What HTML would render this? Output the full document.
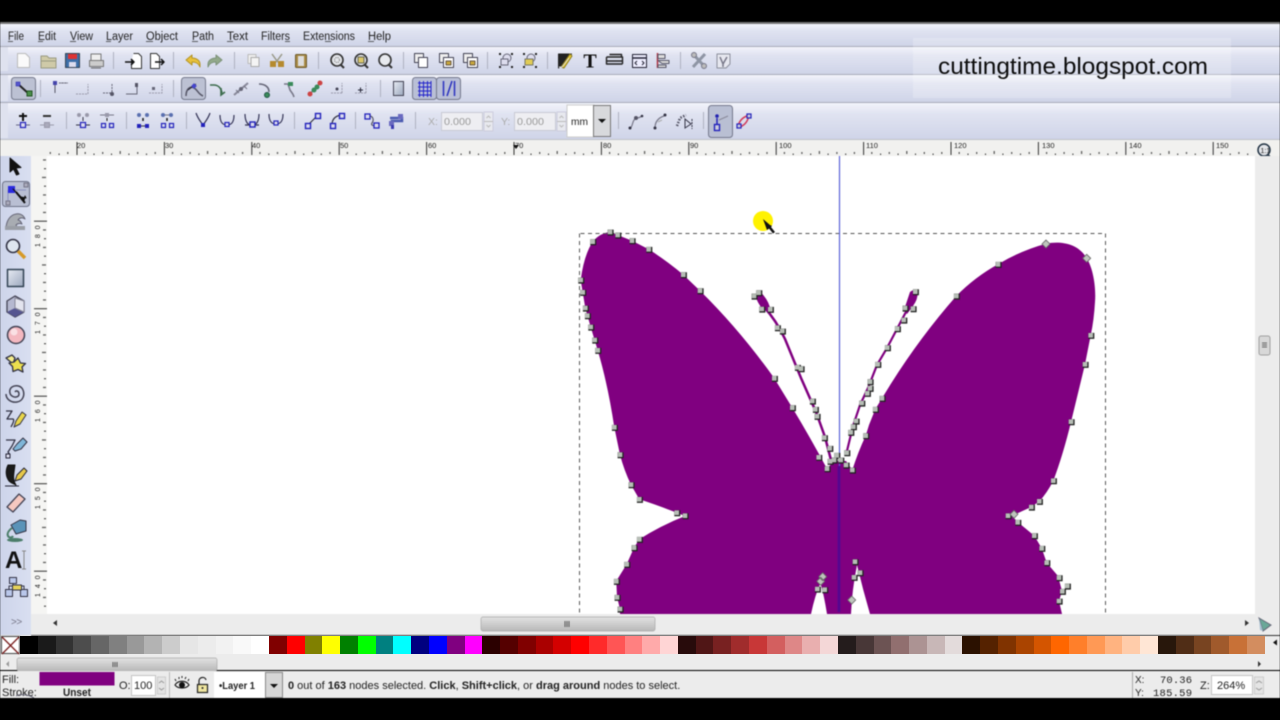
<!DOCTYPE html>
<html><head><meta charset="utf-8"><style>
html,body{margin:0;padding:0;background:#000;width:1280px;height:720px;overflow:hidden}
svg{display:block;position:absolute;left:0;top:0;filter:blur(.45px)}
text{font-family:"Liberation Sans",sans-serif;fill:#222}
#pal{position:absolute;left:20px;top:636px;height:18px;display:flex;filter:blur(.3px)}
#pal i{display:block;width:17.79px;height:18px}
</style></head><body>
<svg width="1280" height="720" viewBox="0 0 1280 720" xmlns="http://www.w3.org/2000/svg">
<defs>
<linearGradient id="tb" x1="0" y1="0" x2="0" y2="1"><stop offset="0" stop-color="#f3f4fb"/><stop offset=".3" stop-color="#e0e3f1"/><stop offset="1" stop-color="#cfd4e8"/></linearGradient>
<linearGradient id="sb" x1="0" y1="0" x2="0" y2="1"><stop offset="0" stop-color="#e2e2e2"/><stop offset="1" stop-color="#b8b8b8"/></linearGradient>
<linearGradient id="tl" x1="0" y1="0" x2="1" y2="0"><stop offset="0" stop-color="#cdd4ea"/><stop offset="1" stop-color="#d9dff1"/></linearGradient>
<linearGradient id="rc" x1="0" y1="0" x2="1" y2="1"><stop offset="0" stop-color="#e8ecf4"/><stop offset="1" stop-color="#9ba7bd"/></linearGradient>
<pattern id="rh" patternUnits="userSpaceOnUse" x="76.5" y="140" width="87.4" height="16"><path d="M.5 2v13M8.7 12v2M17.5 13.5v1.500M26.2 12v2M35 13.500v1.500M43.7 11v3M52.4 13.500v1.500M61.2 12v2M70 13.500v1.500M78.700 12v2" stroke="#333" fill="none"/></pattern>
<pattern id="rv" patternUnits="userSpaceOnUse" x="32" y="220.700" width="15" height="87.500"><path d="M2 .5h13M11 9.200h3M12 18h2M11 26.700h3M12 35.500h2M10 44.200h4M12 53h2M11 61.700h3M12 70.500h2M11 79.200h3" stroke="#333" fill="none"/></pattern>
</defs>

<rect width="1280" height="720" fill="#000"/>
<rect y="22" width="1280" height="2" fill="#777"/>
<rect y="24" width="1280" height="22" fill="url(#tb)"/>
<rect y="47" width="1280" height="27" fill="url(#tb)"/>
<rect y="75" width="1280" height="27" fill="url(#tb)"/>
<rect y="103" width="1280" height="37" fill="url(#tb)"/>
<path d="M0 46.500h1280M0 74.500h1280M0 102.500h1280" stroke="#a9acba"/>
<path d="M0 139.500h1280" stroke="#bfc1c8"/>
<rect x="913" y="38" width="318" height="60" fill="#fff" opacity=".22"/>
<path d="M0 47h8v24H0zM0 75h8v26H0zM0 103h8v35H0z" fill="#dfe2ef"/>

<!-- menu -->
<g font-size="11.500">
<text x="8" y="40" textLength="16" lengthAdjust="spacingAndGlyphs">File</text><text x="38" y="40" textLength="18" lengthAdjust="spacingAndGlyphs">Edit</text><text x="70" y="40" textLength="23" lengthAdjust="spacingAndGlyphs">View</text><text x="106" y="40" textLength="27" lengthAdjust="spacingAndGlyphs">Layer</text><text x="146" y="40" textLength="32" lengthAdjust="spacingAndGlyphs">Object</text><text x="192" y="40" textLength="22" lengthAdjust="spacingAndGlyphs">Path</text><text x="227" y="40" textLength="21" lengthAdjust="spacingAndGlyphs">Text</text><text x="261" y="40" textLength="29" lengthAdjust="spacingAndGlyphs">Filters</text><text x="303" y="40" textLength="52" lengthAdjust="spacingAndGlyphs">Extensions</text><text x="368" y="40" textLength="23" lengthAdjust="spacingAndGlyphs">Help</text>
</g>
<path d="M8 41.500h5M38 41.500h5M70 41.500h6M106 41.500h5M146 41.500h7M192 41.500h6M227 41.500h6M285 41.500h5M325 41.500h6M368 41.500h6" stroke="#333" stroke-width=".8"/>

<!-- toolbar separators -->
<path d="M113.500 52v17M173.500 52v17M234.500 52v17M318.500 52v17M403.500 52v17M487.500 52v17M547.500 52v17M680.500 52v17M40.500 80v17M173.500 80v17M380.500 80v17M66.500 112v17M126.500 112v17M186.500 112v17M294.500 112v17M355.500 112v17M415.500 112v17M618.500 112v17M703.500 112v17" stroke="#aeb1c0"/>

<!-- toolbar 1 -->
<g fill="none" stroke-linejoin="round">
<path d="M17.500 53.500h8l4 4v10h-12z" fill="#fafafa" stroke="#bbb"/>
<path d="M41 56h6l2 2h7v10H41z" fill="#cfcaa8" stroke="#9a9a80"/><path d="M41 61h15" stroke="#9a9a80"/>
<rect x="65.500" y="53.500" width="14" height="14" fill="#3d6fa8" stroke="#345"/><rect x="68" y="54" width="9" height="5" fill="#d33"/><rect x="69" y="62" width="7" height="5" fill="#dde"/>
<path d="M91 60v-6h10v6" fill="#eee" stroke="#777"/><rect x="89.500" y="60.500" width="14" height="6" fill="#ccc" stroke="#777"/><path d="M91 68h10" stroke="#666"/>
<path d="M133.500 53.500h5l3 3v12h-10v-8" fill="#fff" stroke="#333"/><path d="M125 62h9m-3-3l3 3-3 3" stroke="#111" stroke-width="1.500"/>
<path d="M150.500 53.500h6l3 3v12h-9z" fill="#fff" stroke="#333"/><path d="M155 62h9m-3-3l3 3-3 3" stroke="#111" stroke-width="1.500"/>
<path d="M186 60l6-5v3c5 0 8 3 8 6v3c-1-3-4-5-8-5v3z" fill="#e8c13a" stroke="#b39323"/>
<path d="M222 60l-6-5v3c-5 0-8 3-8 6v3c1-3 4-5 8-5v3z" fill="#92a98a" stroke="#7d927a"/>
<path d="M248 54.500h8v9h-8z" fill="#eee" stroke="#bbb"/><path d="M251 57.500h8v9h-8z" fill="#f4f4f4" stroke="#aaa"/>
<path d="M272 54l5 7 5-7M277 61l-5 4M277 61l5 4" stroke="#998" stroke-width="1.500"/><rect x="270" y="61" width="6" height="6" fill="#b58a2e"/><rect x="278" y="61" width="6" height="6" fill="#b58a2e"/>
<rect x="295.500" y="54.500" width="11" height="13" rx="1" fill="#a98b45" stroke="#6e5a2c"/><rect x="298" y="56" width="6" height="10" fill="#ddd"/>
<circle cx="337" cy="60" r="6" fill="#e4e6ea" stroke="#333" stroke-width="1.600"/><path d="M341 65l3 3" stroke="#333" stroke-width="2"/><circle cx="337" cy="60" r="2.500" stroke="#777" stroke-dasharray="1 1"/>
<circle cx="361" cy="60" r="6" fill="#e4e6ea" stroke="#333" stroke-width="1.600"/><path d="M365 65l3 3" stroke="#333" stroke-width="2"/><rect x="358" y="57" width="6" height="6" fill="#dbc76a" stroke="#665"/>
<circle cx="385" cy="60" r="6" fill="#e8eaee" stroke="#333" stroke-width="1.600"/><path d="M389 65l3 3" stroke="#333" stroke-width="2"/>
<rect x="414.500" y="53.500" width="9" height="9" fill="#eee" stroke="#445"/><rect x="418.500" y="57.500" width="9" height="10" fill="#fff" stroke="#445"/>
<rect x="439.500" y="53.500" width="9" height="9" fill="#eee" stroke="#445"/><rect x="443.500" y="57.500" width="10" height="10" fill="#fff" stroke="#445"/><rect x="446" y="61" width="5" height="4" fill="#c9a83a" stroke="#654"/>
<rect x="463.500" y="53.500" width="9" height="9" fill="#eee" stroke="#445"/><rect x="467.500" y="57.500" width="10" height="10" fill="#fff" stroke="#445"/><rect x="470" y="61" width="5" height="4" fill="#c9a83a" stroke="#654"/>
<path d="M499 54h2M511 54h2M499 67h2M511 67h2" stroke="#222" stroke-width="2"/><circle cx="507" cy="58" r="4" fill="#dde" stroke="#667"/><rect x="501" y="59" width="7" height="6" fill="#dde" stroke="#667"/>
<path d="M523 54h2M535 54h2M523 67h2M535 67h2" stroke="#222" stroke-width="2"/><circle cx="531" cy="58" r="4" fill="#dde" stroke="#667"/><rect x="525" y="59" width="8" height="6" fill="#e1cc55" stroke="#776"/>
<path d="M558.500 54h13l-2 3-11 11z" fill="#222" stroke="#222"/><path d="M570 54l-9 13 3 1 8-12z" fill="#e9cd3a" stroke="#8a7a1a"/><path d="M559 67h3l7-9" stroke="#ddd"/>
<path d="M606.500 57v7h3M606.500 57h16v7M606.500 61h16M606.500 64h16M609.500 54.500h12v2" stroke="#222" stroke-width="1.400"/>
<rect x="632.500" y="54.500" width="14" height="13" fill="#eef" stroke="#223"/><path d="M632 58h15" stroke="#223" stroke-width="1.500"/><path d="M637 61l-2 2 2 2M642 61l2 2-2 2" stroke="#223"/>
<path d="M657.500 53v15" stroke="#b03040" stroke-width="1.500"/><path d="M658 54.500h7v4h-7zM658 60.500h11v3h-7zM658 65h8v2.500h-8z" fill="#ddd" stroke="#556"/>
<path d="M693 54l12 13M705 54l-12 13" stroke="#8e95a4" stroke-width="3"/><circle cx="694" cy="55" r="2.500" fill="#bbb" stroke="#778"/><circle cx="704" cy="66" r="2.500" fill="#bbb" stroke="#778"/>
<path d="M717 54h13v10l-4 4h-9z" fill="#e6e7ef" stroke="#8c8f9c"/><path d="M720 57l3 7 4-7M723 64v3" stroke="#778" stroke-width="1.500"/>
</g>
<text x="590" y="67.500" font-size="20" font-weight="bold" text-anchor="middle" style="font-family:'Liberation Serif',serif;fill:#111">T</text>

<!-- toolbar 2 -->
<g fill="none">
<rect x="11.500" y="77.500" width="24" height="22" rx="3" fill="#bcc1d3" stroke="#75798c"/>
<path d="M18 84l11 10" stroke="#222" stroke-width="2"/><rect x="16" y="82" width="4" height="4" fill="#55c" stroke="#22a" stroke-width=".5"/><rect x="27" y="91" width="5" height="5" fill="#4a8f4a" stroke="#252"/>
<path d="M55 83v10M59 83h8" stroke="#556" /><rect x="53" y="81" width="4" height="4" fill="#44a"/><path d="M60 83h8" stroke="#889" stroke-dasharray="2 1"/>
<path d="M76 94h12v-10" stroke="#99a" stroke-dasharray="2 1"/><path d="M103 93h10M112 84v12" stroke="#667" stroke-dasharray="2 1"/><circle cx="112" cy="94" r="2" fill="#556"/>
<path d="M126 94h11v-9" stroke="#667"/><rect x="135" y="83" width="3" height="4" fill="#556"/>
<path d="M149 93h13V84" stroke="#99a" stroke-dasharray="2 1"/><rect x="152" y="87" width="3" height="3" fill="#667"/>
<rect x="181.500" y="77.500" width="24" height="22" rx="3" fill="#bcc1d3" stroke="#75798c"/>
<path d="M186 96c0-8 5-10 8-8 3 1 4 6 9 8" stroke="#556" stroke-width="1.500"/><path d="M188 90l8-6" stroke="#223"/><rect x="192" y="84" width="4" height="4" fill="#44c" transform="rotate(45 194 86)"/>
<path d="M210 85h4c4 0 7 3 8 8" stroke="#3a6a4a" stroke-width="1.600"/><path d="M221 88v7l4-3" stroke="#3a6a4a" stroke-width="1.600"/>
<path d="M234 95l14-12" stroke="#889" stroke-width="2"/><circle cx="241" cy="89" r="2" fill="#667"/><path d="M236 90l3 3M244 86l3 3" stroke="#778"/>
<path d="M259 84c6 0 10 3 10 8" stroke="#667" stroke-width="1.600"/><circle cx="267" cy="95" r="2.500" fill="#3a8a5a" stroke="#254"/>
<path d="M284 84h4l2 6c1 2 3 3 4 7" stroke="#778" stroke-width="1.600"/><rect x="288" y="82" width="5" height="4" fill="#3a8a5a"/>
<path d="M309 95l11-12" stroke="#778" stroke-width="1.500"/><circle cx="310" cy="94" r="2.500" fill="#c44"/><circle cx="314" cy="90" r="2.500" fill="#3a8a5a"/><circle cx="317" cy="87" r="2.500" fill="#3a8a5a"/><circle cx="320" cy="83" r="2.500" fill="#c44"/>
<path d="M331 93h11M342 93V83" stroke="#99a" stroke-dasharray="2 1"/><circle cx="337" cy="89" r="1.500" fill="#445"/>
<path d="M355 93h11M366 93V83" stroke="#99a" stroke-dasharray="2 1"/><path d="M358 90h5M360.500 87.500v5" stroke="#223"/>
<rect x="393.500" y="81.500" width="10" height="14" fill="url(#rc)" stroke="#445"/>
<rect x="412.500" y="77.500" width="24" height="22" rx="3" fill="#b9bfd6" stroke="#75798c"/>
<path d="M418 83h13M418 87h13M418 91h13M418 95h13M419.500 81v16M423.500 81v16M427.500 81v16M431 81v16" stroke="#2222cc"/>
<rect x="436.500" y="77.500" width="24" height="22" rx="3" fill="#b9bfd6" stroke="#75798c"/>
<path d="M443.500 81v15M454.500 81v15M447 96l5-15" stroke="#2a32c0" stroke-width="1.500"/>
</g>

<!-- toolbar 3 -->
<g fill="none">
<path d="M23 113v8M19 116h8" stroke="#111" stroke-width="2"/><path d="M16 125h14" stroke="#668"/><rect x="20.500" y="122.500" width="5" height="5" fill="#dde" stroke="#22b" stroke-width="1.200"/>
<path d="M43 116h8" stroke="#333" stroke-width="2"/><path d="M40 125h14" stroke="#99a"/><rect x="44.500" y="122.500" width="5" height="5" fill="#aab" stroke="#99a"/>
<circle cx="79" cy="115" r="2" fill="#99a"/><circle cx="87" cy="115" r="2" fill="#99a"/><path d="M83 117v4M76 125h14" stroke="#334"/><rect x="80.500" y="122.500" width="5" height="5" stroke="#22b" stroke-width="1.200" fill="#dde"/>
<path d="M100 115h14" stroke="#778"/><rect x="105" y="113" width="4" height="4" fill="#99a"/><path d="M107 118v3" stroke="#111"/><rect x="101.500" y="123.500" width="4" height="4" stroke="#22b" stroke-width="1.200"/><rect x="109.500" y="123.500" width="4" height="4" stroke="#22b" stroke-width="1.200"/>
<circle cx="139" cy="115" r="2" fill="#5a70b0"/><circle cx="147" cy="115" r="2" fill="#5a70b0"/><path d="M143 118v3" stroke="#111" stroke-width="1.500"/><path d="M139 126h8" stroke="#334"/><rect x="137" y="124" width="4" height="4" fill="#22b"/><rect x="145" y="124" width="4" height="4" fill="#22b"/>
<path d="M161 115h12" stroke="#778"/><circle cx="163" cy="115" r="2" fill="#5a70b0"/><circle cx="171" cy="115" r="2" fill="#5a70b0"/><path d="M167 118v3" stroke="#111" stroke-width="1.500"/><rect x="161.500" y="123.500" width="4" height="4" stroke="#22b" stroke-width="1.200"/><rect x="169.500" y="123.500" width="4" height="4" stroke="#22b" stroke-width="1.200"/>
<path d="M196 113c2 6 5 9 7 12 2-3 5-6 7-12" stroke="#335" stroke-width="1.200"/><rect x="201" y="123" width="4" height="4" fill="#22b"/>
<path d="M220 115c0 8 3 10 7 10s7-2 7-10" stroke="#335" stroke-width="1.200"/><rect x="225" y="122.500" width="4" height="4" fill="#dde" stroke="#22b" stroke-width="1.200"/>
<path d="M245 114c0 6 2 10 4 10M259 114c0 6-2 10-4 10M245 125h14" stroke="#335" stroke-width="1.200"/><rect x="250" y="122" width="5" height="5" fill="#dde" stroke="#22b" stroke-width="1.400"/>
<path d="M269 114c0 8 3 10 7 10s7-2 7-10" stroke="#335" stroke-width="1.200"/><rect x="274" y="121" width="4" height="4" fill="#dde" stroke="#22b" stroke-width="1.200"/>
<path d="M308 125l9-9" stroke="#334" stroke-width="1.200"/><rect x="305.500" y="123.500" width="5" height="5" stroke="#22b" stroke-width="1.400" fill="#dde"/><rect x="315.500" y="113.500" width="5" height="5" stroke="#22b" stroke-width="1.400" fill="#dde"/>
<path d="M332 125c0-6 3-9 9-10" stroke="#334" stroke-width="1.200"/><rect x="330.500" y="123.500" width="5" height="5" stroke="#22b" stroke-width="1.400" fill="#dde"/><rect x="339.500" y="113.500" width="5" height="5" stroke="#22b" stroke-width="1.400" fill="#dde"/>
<path d="M367 118c2-5 9 0 5 5-2 3 4 3 6 4" stroke="#556" stroke-width="1.200"/><rect x="365" y="114" width="5" height="5" stroke="#22b" stroke-width="1.300" fill="#dde"/><rect x="374" y="123" width="5" height="5" stroke="#22b" stroke-width="1.300" fill="#dde"/>
<path d="M390 118h12v3h-10v4" stroke="#4a5ab0" stroke-width="2.500"/><rect x="389" y="121" width="5" height="5" fill="#6a6ac0"/><rect x="398" y="114" width="5" height="5" fill="#6a6ac0"/><rect x="391" y="125" width="3" height="4" fill="#3a3ab0"/>
<rect x="441.500" y="112.500" width="41" height="18" fill="#eeeef2" stroke="#c8cad4"/><rect x="514.500" y="112.500" width="41" height="18" fill="#eeeef2" stroke="#c8cad4"/>
<rect x="484" y="112" width="9" height="19" fill="#e8e9ef" stroke="#ccd"/><path d="M484 121.500h9M486.500 118l2-2 2 2M486.500 125l2 2 2-2" stroke="#bbb"/>
<rect x="557" y="112" width="9" height="19" fill="#e8e9ef" stroke="#ccd"/><path d="M557 121.500h9M559.500 118l2-2 2 2M559.500 125l2 2 2-2" stroke="#bbb"/>
<rect x="567" y="105" width="27" height="32" fill="#fff" stroke="#ccc"/>
<rect x="593.500" y="105.500" width="17" height="31" fill="#d8d9dc" stroke="#777"/>
<path d="M598 119h8l-4 4z" fill="#111"/>
<path d="M630 128c3-1 2-7 5-9s3 0 7-3" stroke="#778" stroke-width="1.200"/><circle cx="630" cy="128" r="1.500" fill="#334"/><circle cx="636" cy="118" r="2" fill="#556"/><circle cx="642" cy="116" r="1.300" fill="#334"/>
<path d="M655 128c0-6 3-10 9-12" stroke="#778" stroke-width="1.200"/><circle cx="655" cy="128" r="1.500" fill="#334"/><circle cx="665" cy="115" r="1.500" fill="#334"/><path d="M658 122l4-2" stroke="#aaa"/>
<path d="M677 126l3-8 6-3" stroke="#556" stroke-width="2.500" stroke-dasharray="1.500 1.500"/><path d="M685 119l6 5-6 4z" stroke="#334"/><path d="M692 119v10" stroke="#334" stroke-dasharray="2 1"/>
<rect x="708.500" y="105.500" width="24" height="32" rx="3" fill="#b9bfd3" stroke="#75798c"/>
<path d="M717 118v7" stroke="#22b" stroke-width="1.500"/><circle cx="717" cy="116" r="1.800" fill="#2222b0"/><rect x="714.500" y="124.500" width="5" height="6" fill="#ccd" stroke="#22b" stroke-width="1.400"/><path d="M719 120l9-4" stroke="#889"/>
<path d="M738 126c2-7 6-9 11-11-1 6-4 10-9 12z" stroke="#d23a5a" stroke-width="1.500"/><rect x="737" y="124" width="4" height="4" fill="#ccd" stroke="#22b" stroke-width="1.200"/><rect x="747" y="114" width="4" height="4" fill="#ccd" stroke="#22b" stroke-width="1.200"/>
</g>
<text x="428" y="125" font-size="10.500" style="fill:#aaa">X:</text><text x="444" y="125" font-size="10.500" style="fill:#9a9a9a" textLength="27" lengthAdjust="spacingAndGlyphs">0.000</text>
<text x="501" y="125" font-size="10.500" style="fill:#aaa">Y:</text><text x="517" y="125" font-size="10.500" style="fill:#9a9a9a" textLength="27" lengthAdjust="spacingAndGlyphs">0.000</text>
<text x="571" y="125" font-size="10.500" textLength="17" lengthAdjust="spacingAndGlyphs" font-weight="500">mm</text>

<!-- ruler -->
<rect x="0" y="140" width="1280" height="16" fill="#f1f1ef"/>
<rect x="47" y="140" width="1208" height="16" fill="url(#rh)"/>
<g font-size="7.500" style="fill:#444"><text x="77" y="148">20</text><text x="165" y="148">30</text><text x="252" y="148">40</text><text x="340" y="148">50</text><text x="428" y="148">60</text><text x="515" y="148">70</text><text x="603" y="148">80</text><text x="690" y="148">90</text><text x="779" y="148">100</text><text x="866" y="148">110</text><text x="954" y="148">120</text><text x="1042" y="148">130</text><text x="1129" y="148">140</text><text x="1216" y="148">150</text></g>
<path d="M513 145h6l-3 4z" fill="#111"/>
<rect x="1255" y="140" width="25" height="16" fill="#f1f1ef"/>
<circle cx="1264" cy="150" r="6" fill="#e4e6ea" stroke="#234" stroke-width="1.500"/><path d="M1268 155l3 3" stroke="#234" stroke-width="2"/><text x="1260.500" y="153" font-size="7">1:1</text>

<!-- left toolbar & vruler -->
<rect x="0" y="156" width="31" height="479" fill="url(#tl)"/>
<rect x="31" y="156" width="16" height="458" fill="#f5f5f3"/>
<rect x="32" y="156" width="15" height="458" fill="url(#rv)"/>
<g font-size="7" style="fill:#444"><text transform="translate(40 247) rotate(-90)" letter-spacing="1.500">1 8 0</text><text transform="translate(40 334) rotate(-90)" letter-spacing="1.500">1 7 0</text><text transform="translate(40 422) rotate(-90)" letter-spacing="1.500">1 6 0</text><text transform="translate(40 509) rotate(-90)" letter-spacing="1.500">1 5 0</text><text transform="translate(40 597) rotate(-90)" letter-spacing="1.500">1 4 0</text></g>

<!-- canvas -->
<rect x="47" y="156" width="1208" height="458" fill="#fff"/>

<!-- butterfly -->
<g fill="#800080">
<path d="M610 232L617.700 235L632 240.700L648.700 249.300Q667 261 683.300 274.700L700 290.700Q740 330 774.300 378.300L792.300 407.700Q810 437 827 468.700L834 461L846 461L852.300 470Q858 452 865.700 435.700L869 425L875.300 409.300L882 398.300Q915 343 956.300 296Q975 277 998 264.300Q1022 250 1046 243.700C1060 241 1078 243 1086.700 258.300C1094 270 1096 290 1095 301.700Q1094 320 1090.700 335.300L1085 364.300L1071 422Q1063 455 1053.300 480.700Q1047 493 1039.300 501.300L1031.300 507Q1020 512 1012 516L1017.700 522L1034.300 535.700L1041.700 548.300L1046.700 562.700L1058 576L1062 591L1059 601L1062 614L870 614Q863 590 857 565Q852 590 851 614L827 614Q824 595 820.500 583Q815 595 811 614L620 614L620 609L617 597L616.300 581L626.700 564.300L634 547.700L639.300 539.300Q660 526 685 516Q660 506 639.300 499.300L631 484.700Q624 470 620 454.700L614.300 427.300Q608 385 597.700 350.300L590.700 327L585.300 308L580.700 280Q584 255 592.700 241.700Q600 233 610 232Z"/>
<path d="M755 295Q760 290 764 296Q769 302 770.500 310L763 310Q757 302 755 295Z"/>
<path d="M910 292Q914 288 917.500 293Q918 299 913 306L907 314L904 310Q908 298 910 292Z"/>
</g>
<g fill="none" stroke="#800080">
<path d="M764 307Q776 320 785 339L801 378L816 412L825 437L831 460" stroke-width="2.500"/>
<path d="M908 308L897 329L887 348L877 365L868 388L860 405L853 426L846 455" stroke-width="2.200"/>
</g>

<!-- bbox dashed + guide -->
<path d="M580.500 233.500H1105.500V614M579.500 233.500V614" fill="none" stroke="#555" stroke-dasharray="4 3.500"/>
<path d="M839.500 156V466" stroke="#5a62d8" stroke-width="1.200"/>
<path d="M839 466V612" stroke="#3d0c9a" stroke-width="3" opacity=".6"/>

<!-- nodes -->
<g fill="none" stroke-linecap="square">
<path transform="translate(.6 .6)" stroke="#222" stroke-width="6" d="M592.700 241.700h.01M610 232h.01M617.700 235h.01M632 240.700h.01M648.700 249.300h.01M683.300 274.700h.01M700 290.700h.01M774.300 378.300h.01M792.300 407.700h.01M580.700 280h.01M582.700 292.300h.01M585.300 308h.01M587.300 315.700h.01M590.700 327h.01M594.700 340h.01M597.700 350.300h.01M614.300 427.300h.01M620 454.700h.01M631 484.700h.01M639.300 499.300h.01M676.700 512.700h.01M685 515.700h.01M639.300 539.300h.01M634 547.700h.01M626.700 564.300h.01M616.300 581.300h.01M617 597.300h.01M620 609h.01M818.700 457.300h.01M827 468.700h.01M824.300 437.700h.01M829.700 448.300h.01M830 461.300h.01M836.700 455.300h.01M834 460h.01M840.700 460h.01M846.700 452.700h.01M846 465h.01M852.300 470h.01M865.700 435.700h.01M850.700 432.300h.01M853.300 426.700h.01M856 421h.01M817.300 589h.01M824.700 589.700h.01M855 561.700h.01M860 572.700h.01M854 577.300h.01M758.700 292.700h.01M754 296h.01M761.700 309h.01M770.300 309.300h.01M777.300 327.700h.01M782.300 331h.01M797.300 367.300h.01M801 368.700h.01M812.300 401h.01M815.300 409.300h.01M817 416.300h.01M915.300 291.700h.01M913 308.700h.01M905 308h.01M903.700 320h.01M897.300 328.700h.01M887.300 347.700h.01M877.700 364.300h.01M870 381.700h.01M870 388.300h.01M867.300 393.300h.01M861.700 403h.01M882 398.300h.01M875.300 409.300h.01M956.300 296h.01M998 264.300h.01M1090.700 335.300h.01M1085 364.300h.01M1071 421.700h.01M1053.300 480.700h.01M1039.300 501.300h.01M1031.300 507h.01M1008 515.700h.01M1017.700 522.300h.01M1034.300 535.700h.01M1041.700 548.300h.01M1046.700 562.700h.01M1059 577.700h.01M1067.300 586h.01M1062.300 591.300h.01M1059 601h.01"/>
<path stroke="#b7beb6" stroke-width="4.600" d="M592.700 241.700h.01M610 232h.01M617.700 235h.01M632 240.700h.01M648.700 249.300h.01M683.300 274.700h.01M700 290.700h.01M774.300 378.300h.01M792.300 407.700h.01M580.700 280h.01M582.700 292.300h.01M585.300 308h.01M587.300 315.700h.01M590.700 327h.01M594.700 340h.01M597.700 350.300h.01M614.300 427.300h.01M620 454.700h.01M631 484.700h.01M639.300 499.300h.01M676.700 512.700h.01M685 515.700h.01M639.300 539.300h.01M634 547.700h.01M626.700 564.300h.01M616.300 581.300h.01M617 597.300h.01M620 609h.01M818.700 457.300h.01M827 468.700h.01M824.300 437.700h.01M829.700 448.300h.01M830 461.300h.01M836.700 455.300h.01M834 460h.01M840.700 460h.01M846.700 452.700h.01M846 465h.01M852.300 470h.01M865.700 435.700h.01M850.700 432.300h.01M853.300 426.700h.01M856 421h.01M817.300 589h.01M824.700 589.700h.01M855 561.700h.01M860 572.700h.01M854 577.300h.01M758.700 292.700h.01M754 296h.01M761.700 309h.01M770.300 309.300h.01M777.300 327.700h.01M782.300 331h.01M797.300 367.300h.01M801 368.700h.01M812.300 401h.01M815.300 409.300h.01M817 416.300h.01M915.300 291.700h.01M913 308.700h.01M905 308h.01M903.700 320h.01M897.300 328.700h.01M887.300 347.700h.01M877.700 364.300h.01M870 381.700h.01M870 388.300h.01M867.300 393.300h.01M861.700 403h.01M882 398.300h.01M875.300 409.300h.01M956.300 296h.01M998 264.300h.01M1090.700 335.300h.01M1085 364.300h.01M1071 421.700h.01M1053.300 480.700h.01M1039.300 501.300h.01M1031.300 507h.01M1008 515.700h.01M1017.700 522.300h.01M1034.300 535.700h.01M1041.700 548.300h.01M1046.700 562.700h.01M1059 577.700h.01M1067.300 586h.01M1062.300 591.300h.01M1059 601h.01"/>
</g>
<g fill="#bfc5bd" stroke="#666" stroke-width=".8">
<path d="M1046 240l4 4-4 4-4-4zM1086.700 254.300l4 4-4 4-4-4zM1014 510.300l4 4-4 4-4-4zM822.700 572.700l4 4-4 4-4-4zM820.700 577.300l4 4-4 4-4-4zM851.700 596l4 4-4 4-4-4z"/>
</g>

<!-- cursor -->
<circle cx="763" cy="221" r="10" fill="#fff200"/>
<path d="M763 219l7 6 2 1-1 1 4 5-2 1.500-4-5-2 1.500z" fill="#111"/>

<!-- tool icons -->
<g fill="none" stroke-linejoin="round">
<path d="M10 158l0 14 3.500-3 3 6 2.500-1-3-6 5-.5z" fill="#111" stroke="#111"/>
<rect x="2.500" y="181.500" width="27" height="25" rx="3" fill="#b9bfd3" stroke="#6e7388"/>
<path d="M11 190h15M8 203V190" stroke="#8c90c0" stroke-width="1"/><rect x="8" y="186" width="7" height="7" fill="#2a2ae0"/><rect x="24" y="183" width="4" height="4" fill="#aab" stroke="#778"/><rect x="6" y="201" width="4" height="4" fill="#aab" stroke="#778"/>
<path d="M13 189l11 12 1-5 1 2-5-1z" fill="#111" stroke="#111"/><path d="M16 192l9 11" stroke="#111" stroke-width="2"/>
<path d="M6 229c0-8 4-14 10-15 5-1 8 2 9 5-3-2-6-1-7 1 2 0 3 2 4 4-3-1-5 0-6 1 1 2 2 4 8 4z" fill="#a8acb2" stroke="#667"/><rect x="5" y="226" width="20" height="4" fill="#9a9ea6"/>
<circle cx="13" cy="246" r="6.500" fill="#dfe6ef" stroke="#334" stroke-width="1.600"/><path d="M18 251l7 7" stroke="#d69a28" stroke-width="3.500"/>
<rect x="7.500" y="269.500" width="16" height="17" fill="url(#rc)" stroke="#334455" stroke-width="1.500"/>
<path d="M15 296l9 5v11l-9 5-8-5v-11z" fill="#b5b8d0" stroke="#445" stroke-width="1.300"/><path d="M15 308l-8 4 8 5 9-5z" fill="#555590"/><path d="M15 308V298l9 3v11z" fill="#e3e4ee" stroke="#889"/>
<circle cx="16" cy="335" r="8.500" fill="#f4b8c0" stroke="#445" stroke-width="1.500"/><circle cx="14" cy="332" r="3.500" fill="#fae0e4"/>
<path d="M6 358l6-3 3 3-2 6z" fill="#f3ec8c" stroke="#334" stroke-width="1.300"/><path d="M18 358l2.500 5 5 .5-3.500 3.500 1 5-5-2.500-5 2-.5-5-3.500-3.500 5-1z" fill="#ece04e" stroke="#334" stroke-width="1.300"/>
<path d="M15 392c1-2 4-1 4 2s-4 4-7 2-3-7 0-9 9-2 11 3 0 11-6 12-11-3-11-8" stroke="#445" stroke-width="1.500"/>
<g transform="translate(0 3)"><path d="M6 408h6l-5 8 6 0c2 1-1 6-2 8" stroke="#334" stroke-width="1.300"/><path d="M14 424l2-6 6-9 4 3-6 9z" fill="#e9d64a" stroke="#334"/></g>
<path d="M6 440h9l-3 6-4 6 2 3" stroke="#334" stroke-width="1.300"/><path d="M13 449l4-5 6-6 4 4-6 7-6 2z" fill="#7fb6d8" stroke="#334"/><rect x="6" y="454" width="4" height="4" fill="#dde" stroke="#223"/>
<path d="M8 465c-3 6-2 12 1 16 3 3 6 3 7 4-4-6-2-12-1-20z" fill="#1a1a1a" stroke="#111"/><path d="M15 481l2-6 7-7 3 3-6 8z" fill="#e6c84a" stroke="#223"/><path d="M5 486h14" stroke="#223"/>
<path d="M7 507l12-13 6 5-12 13z" fill="#f5c8c0" stroke="#445" stroke-width="1.300"/>
<path d="M11 525l9-5 6 1v10l-10 3z" fill="#5a93b8" stroke="#334"/><path d="M12 528c-4 3-5 6-4 8s4 2 5 0" stroke="#4b7d6a" stroke-width="2"/><ellipse cx="15" cy="540" rx="8" ry="2" fill="#4b7d6a"/>
<path d="M24 551v18" stroke="#888"/><path d="M22 551h4M22 569h4" stroke="#888"/>
<rect x="5.500" y="589.500" width="7" height="7" fill="#b9c7ea" stroke="#334"/><rect x="20.500" y="589.500" width="7" height="7" fill="#b9c7ea" stroke="#334"/><rect x="9.500" y="577.500" width="7" height="6" fill="#b9c7ea" stroke="#334"/><rect x="12.500" y="585" width="9" height="5" fill="#e6d25a" stroke="#334"/><path d="M9 589v-3h4M24 589v-3h-3M13 583v2" stroke="#334"/>
</g>
<text x="5" y="568" font-size="24" font-weight="bold" style="fill:#111">A</text>
<text x="11" y="625" font-size="10" style="fill:#778" letter-spacing="-.5">&gt;&gt;</text>

<!-- bottom and right gray -->
<rect x="1255" y="156" width="25" height="480" fill="#ececec"/>
<rect x="31" y="614" width="1224" height="21" fill="#ececec"/>
<rect x="0" y="635" width="1280" height="1" fill="#333"/>
<rect x="0" y="635" width="31" height="1" fill="#ddd"/>
<rect x="0" y="636" width="1280" height="34" fill="#ececec"/>
<rect x="481" y="617" width="174" height="14" rx="2" fill="url(#sb)" stroke="#a8a8a8" stroke-width=".7"/>
<path d="M565 621v6M567 621v6M569 621v6" stroke="#555"/>
<path d="M57 620v6l-4-3zM1245 620v6l4-3z" fill="#333"/>
<rect x="1259" y="336" width="11" height="19" rx="2" fill="#d8d8d8" stroke="#a0a0a0"/><path d="M1262 343h5M1262 345h5M1262 347h5" stroke="#666"/>
<path d="M1259 618l12 7-8 6z" fill="#6aa898" stroke="#667"/><path d="M1259 618l4 13-3-1z" fill="#a5bed0"/>
<path d="M1276 640v6l-4-3z" fill="#111" transform="translate(1 -.5)"/>

<!-- palette scroll -->
<rect x="17" y="658" width="200" height="13" rx="2" fill="url(#sb)" stroke="#aaa" stroke-width=".7"/>
<path d="M113 662v5M115 662v5M117 662v5" stroke="#555"/>
<path d="M9 661v6l-3-3z" fill="#999"/><path d="M1258 661v6l3-3z" fill="#333"/>

<!-- X swatch -->
<rect x="1.500" y="636.500" width="18" height="17" fill="#fff" stroke="#444"/>
<path d="M2 637l17 17M19 637L2 654" stroke="#7a2020" stroke-width="1.300"/>

<!-- status -->
<rect x="0" y="671" width="1280" height="27" fill="#ececec"/>
<text x="2" y="683" font-size="11">Fill:</text><text x="2" y="696" font-size="11">Stroke:</text>
<path d="M16 696c3-2 12-2 18 2" stroke="#667" fill="none"/>
<rect x="39.500" y="672" width="75" height="13.500" fill="#800080"/>
<text x="63" y="696" font-size="11" font-weight="bold" textLength="28" lengthAdjust="spacingAndGlyphs">Unset</text>
<text x="119" y="689" font-size="11">O:</text>
<rect x="131.500" y="675.500" width="24" height="20" fill="#fff" stroke="#c4c4c4"/>
<text x="134" y="689" font-size="11">100</text>
<rect x="157.500" y="677" width="8" height="17" fill="#e4e4e4" stroke="#ccc"/><path d="M159 683l2.500-2 2.500 2M159 688l2.500 2 2.500-2" stroke="#999" fill="none"/>
<path d="M169.500 672v26" stroke="#bbb"/>
<path d="M175 685c3-5 11-5 14 0-3 4-11 4-14 0z" fill="#eee" stroke="#222" stroke-width="1.200"/><circle cx="182" cy="685" r="3" fill="#111"/><path d="M176 681l-1-2M179 679v-2M182 678v-2M185 679l1-2M188 681l1-2" stroke="#222"/>
<rect x="197.500" y="684.500" width="10" height="8" fill="#f0e6a0" stroke="#222" stroke-width="1.200"/><path d="M199 684v-3c0-4 6-5 7-1" fill="none" stroke="#222" stroke-width="1.200"/><circle cx="202.500" cy="688" r="1" fill="#222"/>
<rect x="214" y="672" width="51" height="26" fill="#fff"/>
<rect x="265.500" y="672.500" width="17" height="25" fill="#d6d6d6" stroke="#888"/>
<path d="M270 684h8l-4 4z" fill="#111"/>
<text x="219" y="689" font-size="10" font-weight="bold" textLength="36" lengthAdjust="spacingAndGlyphs">•Layer 1</text>
<text x="288" y="689" font-size="11"><tspan font-weight="bold">0</tspan> out of <tspan font-weight="bold">163</tspan> nodes selected. <tspan font-weight="bold">Click</tspan>, <tspan font-weight="bold">Shift+click</tspan>, or <tspan font-weight="bold">drag around</tspan> nodes to select.</text>
<path d="M1132.500 672v26" stroke="#aaa"/>
<text x="1135" y="683" font-size="10">X:</text><text x="1135" y="696" font-size="10">Y:</text>
<text x="1160" y="683" font-size="10.500" style="font-family:'Liberation Mono',monospace" textLength="32">70.36</text><text x="1153" y="696" font-size="10.500" style="font-family:'Liberation Mono',monospace" textLength="39">185.59</text>
<text x="1200" y="689" font-size="11">Z:</text>
<rect x="1211.500" y="675.500" width="41" height="19" fill="#fff" stroke="#c4c4c4"/>
<text x="1217" y="689" font-size="11">264%</text>
<rect x="1254.500" y="677" width="9" height="17" fill="#e4e4e4" stroke="#ccc"/><path d="M1256 683l3-2 3 2M1256 688l3 2 3-2" stroke="#999" fill="none"/>
<rect x="0" y="698" width="1280" height="22" fill="#000"/>

<!-- watermark -->
<text x="938" y="74" font-size="23.500" textLength="270" lengthAdjust="spacingAndGlyphs" style="fill:#0c0c0c">cuttingtime.blogspot.com</text>
</svg>
<div id="pal"><i style="background:#000"></i><i style="background:#1a1a1a"></i><i style="background:#333"></i><i style="background:#4d4d4d"></i><i style="background:#666"></i><i style="background:#808080"></i><i style="background:#999"></i><i style="background:#b3b3b3"></i><i style="background:#ccc"></i><i style="background:#e6e6e6"></i><i style="background:#ececec"></i><i style="background:#f2f2f2"></i><i style="background:#f9f9f9"></i><i style="background:#fff"></i><i style="background:#800000"></i><i style="background:#f00"></i><i style="background:#808000"></i><i style="background:#ff0"></i><i style="background:#008000"></i><i style="background:#0f0"></i><i style="background:#008080"></i><i style="background:#0ff"></i><i style="background:#000080"></i><i style="background:#00f"></i><i style="background:#800080"></i><i style="background:#f0f"></i><i style="background:#2b0000"></i><i style="background:#500"></i><i style="background:#800000"></i><i style="background:#a00"></i><i style="background:#d40000"></i><i style="background:#f00"></i><i style="background:#ff2a2a"></i><i style="background:#f55"></i><i style="background:#ff8080"></i><i style="background:#faa"></i><i style="background:#ffd5d5"></i><i style="background:#280b0b"></i><i style="background:#501616"></i><i style="background:#782121"></i><i style="background:#a02c2c"></i><i style="background:#c83737"></i><i style="background:#d35f5f"></i><i style="background:#de8787"></i><i style="background:#e9afaf"></i><i style="background:#f4d7d7"></i><i style="background:#241c1c"></i><i style="background:#483737"></i><i style="background:#6c5353"></i><i style="background:#916f6f"></i><i style="background:#ac9393"></i><i style="background:#c8b7b7"></i><i style="background:#e3dbdb"></i><i style="background:#2b1100"></i><i style="background:#520"></i><i style="background:#803300"></i><i style="background:#a40"></i><i style="background:#d45500"></i><i style="background:#f60"></i><i style="background:#ff7f2a"></i><i style="background:#f95"></i><i style="background:#ffb380"></i><i style="background:#fca"></i><i style="background:#ffe6d5"></i><i style="background:#28170b"></i><i style="background:#502d16"></i><i style="background:#784421"></i><i style="background:#a05a2c"></i><i style="background:#c87137"></i><i style="background:#d38d5f"></i></div>
</body></html>
